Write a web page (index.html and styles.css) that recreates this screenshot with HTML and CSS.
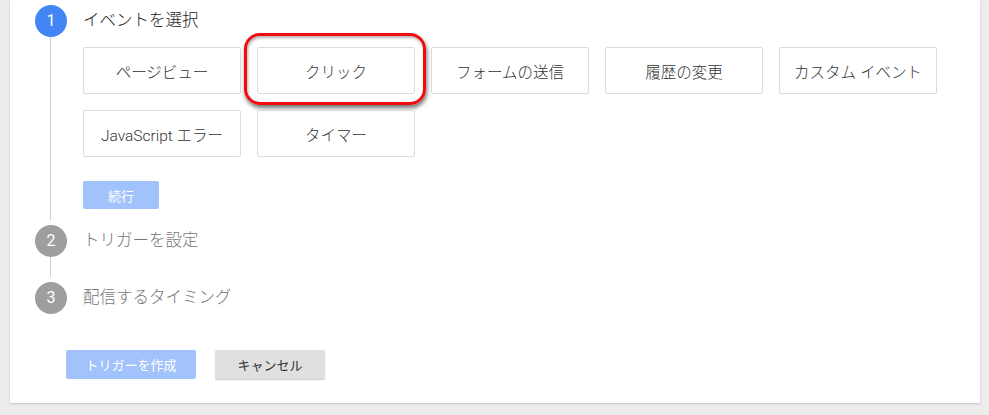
FILE: index.html
```html
<!DOCTYPE html>
<html lang="ja">
<head>
<meta charset="utf-8">
<link rel="stylesheet" href="styles.css">
</head>
<body>
<div class="card">
  <div class="step">
    <div class="num active">1</div>
    <div class="title active">イベントを選択</div>
    <div class="rail"></div>
    <div class="body body-1">
      <div class="choices">
        <div class="choice">ページビュー</div>
        <div class="choice selected">クリック<span class="highlight"></span></div>
        <div class="choice">フォームの送信</div>
        <div class="choice">履歴の変更</div>
        <div class="choice">カスタム イベント</div>
        <div class="choice">JavaScript エラー</div>
        <div class="choice">タイマー</div>
      </div>
      <div class="btn primary small">続行</div>
    </div>
  </div>
  <div class="step">
    <div class="num">2</div>
    <div class="title">トリガーを設定</div>
    <div class="rail"></div>
    <div class="body body-2"></div>
  </div>
  <div class="step">
    <div class="num">3</div>
    <div class="title">配信するタイミング</div>
  </div>
  <div class="actions">
    <div class="btn primary create">トリガーを作成</div>
    <div class="btn cancel">キャンセル</div>
  </div>
</div>
</body>
</html>
```

FILE: styles.css
```css
html, body {
  margin: 0;
  padding: 0;
}
body {
  background: #ececec;
  font-family: Roboto, "Noto Sans CJK JP", sans-serif;
  width: 989px;
  height: 415px;
  overflow: hidden;
}
.card {
  margin-left: 10px;
  width: 970px;
  height: 403px;
  background: #fff;
  box-shadow: 0 1px 2px rgba(0, 0, 0, 0.18);
  padding: 5px 0 0 25px;
  box-sizing: border-box;
}
.step {
  display: grid;
  grid-template-columns: 32px 1fr;
  column-gap: 16px;
}
.num {
  width: 32px;
  height: 32px;
  border-radius: 50%;
  background: #9e9e9e;
  color: #fff;
  font-size: 16px;
  line-height: 32px;
  text-align: center;
}
.num.active {
  background: #4285f4;
}
.title {
  font-size: 16.5px;
  font-weight: 300;
  line-height: 32px;
  color: #757575;
}
.title.active {
  color: #222;
}
.rail::before {
  content: "";
  display: block;
  width: 1px;
  margin-left: 15px;
  height: calc(100% - 5px);
  background: #cfcfcf;
}
.body-1 {
  padding: 10px 0 16px;
}
.body-2 {
  height: 25px;
}
.choices {
  display: grid;
  grid-template-columns: repeat(5, 158px);
  grid-auto-rows: 47px;
  gap: 16px;
}
.choice {
  position: relative;
  border: 1px solid #dcdcdc;
  border-radius: 2px;
  box-sizing: border-box;
  display: flex;
  align-items: center;
  justify-content: center;
  font-size: 15.5px;
  font-weight: 300;
  color: #333;
}
.highlight {
  position: absolute;
  top: -15px;
  left: -14px;
  right: -12px;
  bottom: -12px;
  border: 3px solid #f00c0c;
  border-radius: 16px;
  box-shadow: 1px 3px 4px rgba(0, 0, 0, 0.55), inset 1px 2px 3px rgba(0, 0, 0, 0.3);
}
.btn {
  display: flex;
  align-items: center;
  justify-content: center;
  font-size: 13px;
  border-radius: 2px;
  box-sizing: border-box;
}
.primary {
  background: #a1c2fa;
  color: #fff;
}
.small {
  margin-top: 24px;
  width: 76px;
  height: 28px;
}
.actions {
  display: flex;
  gap: 19px;
  margin: 36px 0 0 31px;
}
.create {
  width: 130px;
  height: 29px;
}
.cancel {
  width: 110px;
  height: 29px;
  background: #e0e0e0;
  color: #333;
  box-shadow: 0 1px 1px rgba(0, 0, 0, 0.2);
}
```
